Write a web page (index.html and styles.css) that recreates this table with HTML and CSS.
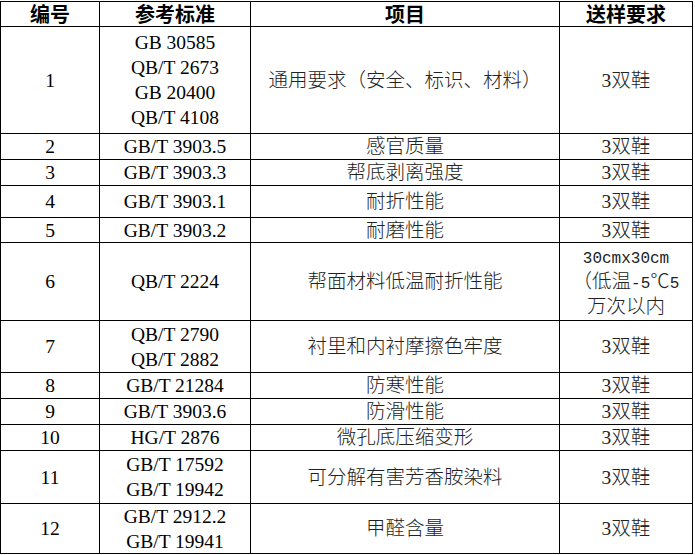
FILE: index.html
```html
<!DOCTYPE html>
<html lang="zh-CN">
<head>
<meta charset="utf-8">
<title>送样要求</title>
<link rel="stylesheet" href="styles.css">
</head>
<body>
<div class="spec" role="table">
  <div class="cell head">编号</div>
  <div class="cell head">参考标准</div>
  <div class="cell head">项目</div>
  <div class="cell head">送样要求</div>

  <div class="cell">1</div>
  <div class="cell">GB 30585<br>QB/T 2673<br>GB 20400<br>QB/T 4108</div>
  <div class="cell cn">通用要求（安全、标识、材料）</div>
  <div class="cell cn">3双鞋</div>

  <div class="cell">2</div>
  <div class="cell">GB/T 3903.5</div>
  <div class="cell cn">感官质量</div>
  <div class="cell cn">3双鞋</div>

  <div class="cell">3</div>
  <div class="cell">GB/T 3903.3</div>
  <div class="cell cn">帮底剥离强度</div>
  <div class="cell cn">3双鞋</div>

  <div class="cell">4</div>
  <div class="cell">GB/T 3903.1</div>
  <div class="cell cn">耐折性能</div>
  <div class="cell cn">3双鞋</div>

  <div class="cell">5</div>
  <div class="cell">GB/T 3903.2</div>
  <div class="cell cn">耐磨性能</div>
  <div class="cell cn">3双鞋</div>

  <div class="cell">6</div>
  <div class="cell">QB/T 2224</div>
  <div class="cell cn">帮面材料低温耐折性能</div>
  <div class="cell cn"><div class="lines"><span class="half">30cmx30cm</span><br>（低温<span class="half">-5</span>℃<span class="half">5</span><br>万次以内</div></div>

  <div class="cell">7</div>
  <div class="cell">QB/T 2790<br>QB/T 2882</div>
  <div class="cell cn">衬里和内衬摩擦色牢度</div>
  <div class="cell cn">3双鞋</div>

  <div class="cell">8</div>
  <div class="cell">GB/T 21284</div>
  <div class="cell cn">防寒性能</div>
  <div class="cell cn">3双鞋</div>

  <div class="cell">9</div>
  <div class="cell">GB/T 3903.6</div>
  <div class="cell cn">防滑性能</div>
  <div class="cell cn">3双鞋</div>

  <div class="cell">10</div>
  <div class="cell">HG/T 2876</div>
  <div class="cell cn">微孔底压缩变形</div>
  <div class="cell cn">3双鞋</div>

  <div class="cell">11</div>
  <div class="cell">GB/T 17592<br>GB/T 19942</div>
  <div class="cell cn">可分解有害芳香胺染料</div>
  <div class="cell cn">3双鞋</div>

  <div class="cell">12</div>
  <div class="cell">GB/T 2912.2<br>GB/T 19941</div>
  <div class="cell cn">甲醛含量</div>
  <div class="cell cn">3双鞋</div>
</div>
</body>
</html>
```

FILE: styles.css
```css
html, body {
  margin: 0;
  padding: 0;
  background: #ffffff;
}

body {
  padding-top: 1px;
}

/* The black background shows through the 1px gaps and padding as the rules */
.spec {
  display: grid;
  width: 693px;
  box-sizing: border-box;
  padding: 1px;
  gap: 1px;
  background: #000;
  grid-template-columns: 98px 150px 308px 132px;
  grid-template-rows: 24px 106px 25px 25px 31px 24px 77px 51px 25px 25px 25px 52px 49px;
  font-family: "Liberation Serif", "Noto Sans CJK SC", serif;
  font-size: 19.5px;
  line-height: 25px;
  color: #000;
}

.cell {
  background: #fff;
  display: flex;
  align-items: center;
  justify-content: center;
  text-align: center;
  white-space: nowrap;
}

.head {
  font-family: "Noto Sans CJK SC", sans-serif;
  font-weight: 700;
  font-size: 20px;
  line-height: 24px;
}

.cn {
  font-weight: 300;
  color: #222;
}

.lines {
  text-align: center;
}

.half {
  font-family: "Liberation Mono", monospace;
  font-size: 16px;
  line-height: 1;
}
```
